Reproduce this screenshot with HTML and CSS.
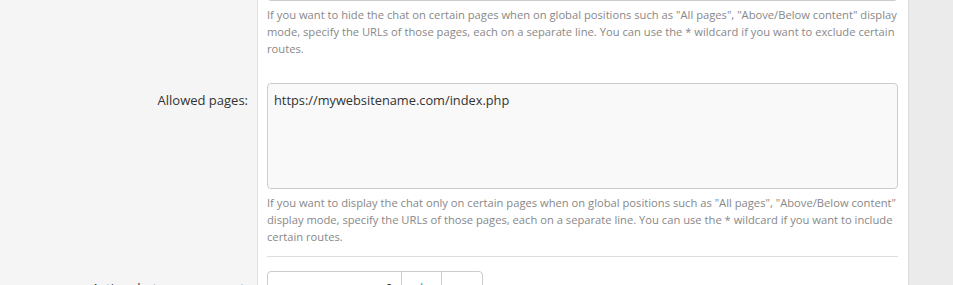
FILE: index.html
```html
<!DOCTYPE html>
<html>
<head>
    <title>Chat settings</title>
    <link rel="stylesheet" href="styles.css">
</head>
<body>
    <div class="panel">
        <div class="row">
            <div class="label"></div>
            <div class="field no-line">
                <div class="textarea"></div>
                <p class="help">If you want to hide the chat on certain pages when on global positions such as "All pages", "Above/Below content" display mode, specify the URLs of those pages, each on a separate line. You can use the * wildcard if you want to exclude certain routes.</p>
            </div>
        </div>

        <div class="row">
            <div class="label">Allowed pages:</div>
            <div class="field">
                <div class="textarea">https://mywebsitename.com/index.php</div>
                <p class="help">If you want to display the chat only on certain pages when on global positions such as "All pages", "Above/Below content" display mode, specify the URLs of those pages, each on a separate line. You can use the * wildcard if you want to include certain routes.</p>
            </div>
        </div>

        <div class="row">
            <div class="label">Active chat users amount:</div>
            <div class="field no-line">
                <div class="number-group">
                    <div class="number-value">0</div>
                    <div class="number-btn plus">+</div>
                    <div class="number-btn">&minus;</div>
                </div>
            </div>
        </div>
    </div>
</body>
</html>
```

FILE: styles.css
```css
body {
    margin: 0;
    padding: 0;
    background-color: #ebebeb;
    font-family: "Open Sans", Arial, sans-serif;
    color: #333;
    overflow: hidden;
}

.panel {
    width: 908px;
    background-color: #fff;
    border-right: 1px solid #dcdcdc;
    margin-top: -119px;
}

.row {
    display: flex;
}

.label {
    width: 248px;
    flex-shrink: 0;
    background-color: #f5f5f5;
    border-right: 1px solid #e2e2e2;
    text-align: right;
    padding: 22px 9px 0 0;
    font-size: 13px;
    line-height: 18px;
}

.field {
    flex: 1;
    margin: 0 10px 0 9px;
    padding: 14px 0 11px;
    border-bottom: 1px solid #dedede;
}

.field.no-line {
    border-bottom-color: transparent;
}

.textarea {
    height: 90px;
    padding: 7px 6px;
    border: 1px solid #ccc;
    border-radius: 4px;
    background-color: #f9f9f9;
    font-size: 12.8px;
    line-height: 18px;
}

.help {
    margin: 5px 0 0;
    font-size: 11.2px;
    line-height: 17px;
    color: #888;
}

.number-group {
    display: flex;
    width: 214px;
    height: 32px;
    border: 1px solid #ccc;
    border-radius: 4px;
    font-size: 12.8px;
}

.number-value {
    width: 126px;
    padding: 7px 8px 0 0;
    text-align: right;
}

.number-btn {
    width: 40px;
    border-left: 1px solid #ccc;
    text-align: center;
    padding-top: 4px;
    font-size: 16px;
    color: #555;
}

.number-btn.plus {
    color: #2a9fb0;
}
```
